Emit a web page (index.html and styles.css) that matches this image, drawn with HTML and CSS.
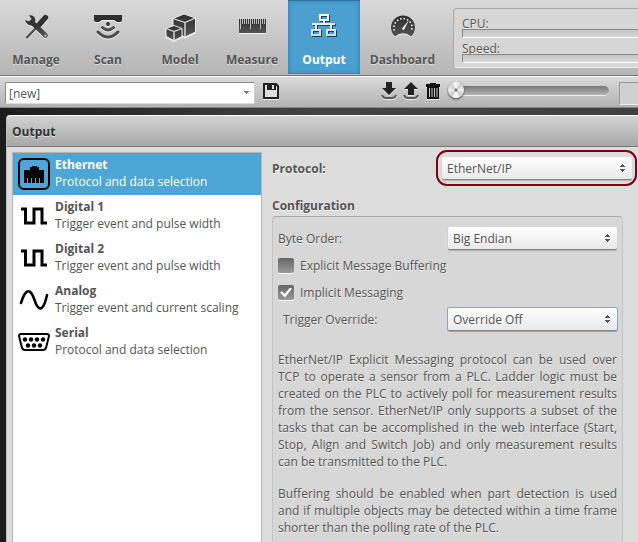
FILE: index.html
```html
<!DOCTYPE html>
<html lang="en">
<head>
<meta charset="utf-8">
<title>Output</title>
<link rel="stylesheet" href="styles.css">
</head>
<body>
<svg class="defs" aria-hidden="true">
  <defs>
    <linearGradient id="ink" x1="0" y1="0" x2="0" y2="1"><stop offset="0" stop-color="#2c2c2c"/><stop offset="1" stop-color="#555"/></linearGradient>
    <linearGradient id="pale" x1="0" y1="0" x2="0" y2="1"><stop offset="0" stop-color="#fff"/><stop offset="1" stop-color="#d8d8d8"/></linearGradient>
    <symbol id="pulse" viewBox="0 0 32 32"><path d="M3 9h4.500v14h8.500V9h8v14h5" fill="none" stroke="#000" stroke-width="3"/></symbol>
  </defs>
</svg>
<header class="toolbar">
  <nav class="tabs">
    <a class="tab" href="#manage">
      <svg class="tab-icon" viewBox="0 0 32 32"><path d="M7 25.500 18 14" stroke="#4a4a4a" stroke-width="2.200" stroke-linecap="round"/><path d="M18.500 13.500 25.500 5.500" stroke="#303030" stroke-width="5.400" stroke-linecap="round"/><path d="M13 11.500 25.500 23.500" stroke="url(#ink)" stroke-width="4.800" stroke-linecap="round"/><path d="M9 3.500C13 2.500 16.500 6 15 10.500S8 14.500 5.500 9.500V8L9 9.500 11.500 7z" fill="#333"/><circle cx="25.500" cy="23.500" r="1" fill="#ddd"/></svg>
      <span>Manage</span></a>
    <a class="tab" href="#scan">
      <svg class="tab-icon" viewBox="0 0 32 32"><path d="M2 3h28v5q0 2-2 2h-3l-3-2H10l-3 2H4Q2 10 2 8z" fill="#2e2e2e"/><circle cx="16" cy="12" r="2" fill="#333"/><path d="M10.500 15.500q5.500 5 11 0M6 20q10 10 20 0" fill="none" stroke="#4c4c4c" stroke-width="3" stroke-linecap="round"/></svg>
      <span>Scan</span></a>
    <a class="tab" href="#model">
      <svg class="tab-icon" viewBox="0 0 32 32"><g fill="url(#ink)" stroke="#e8e8e8" stroke-linejoin="round"><path d="M9 6.500 20 2l11.500 4v14L21 25 9 20z"/><path d="M9 6.500l12 4 10.500-4.500M21 10.500V25" fill="none" stroke-width="1.300"/><path d="M2 16.500l8-3 8 3v8l-8 4-8-4z"/><path d="M2 16.500l8 3 8-3M10 19.500v9" fill="none" stroke-width="1.300"/></g></svg>
      <span>Model</span></a>
    <a class="tab" href="#measure">
      <svg class="tab-icon" viewBox="0 0 32 32"><path d="M3 7h27v14H3z" fill="url(#ink)"/><path d="M4.500 7v10M6.500 7v5M8.500 7v5M10.500 7v5M12.500 7v5M14.500 7v10M16.500 7v5M18.500 7v5M20.500 7v5M22.500 7v5M24.500 7v10M26.500 7v5M28.500 7v5" stroke="#bbb"/></svg>
      <span>Measure</span></a>
    <a class="tab active" href="#output" aria-current="page">
      <svg class="tab-icon" viewBox="0 0 32 32"><g fill="none" stroke="#173f57" stroke-width="2" transform="translate(1 1)"><path d="M12 3h8v5h-8zM16 8v4M4 12h23M8 12v5M23 12v5M4 18h8v5H4zM19 18h8v5h-8z"/></g><g fill="none" stroke="url(#pale)" stroke-width="2"><path d="M12 3h8v5h-8zM16 8v4M8 12v5M23 12v5M4 18h8v5H4zM19 18h8v5h-8z"/><path d="M4 12h23" stroke="#eee"/></g></svg>
      <span>Output</span></a>
    <a class="tab wide" href="#dashboard">
      <svg class="tab-icon" viewBox="0 0 32 32"><path d="M8 24.500A12 12 0 1 1 24 24.500Q16 18 8 24.500z" fill="url(#ink)"/><path d="M7.500 18.500a9 9 0 1 1 17 0" fill="none" stroke="#eee" stroke-width="1.700" stroke-dasharray="1.500 2"/><path d="M14.500 17 22 8l-5 10z" fill="#eee"/></svg>
      <span>Dashboard</span></a>
  </nav>
  <div class="stats">
    <div class="stat"><span>CPU:</span><div class="meter"></div></div>
    <div class="stat"><span>Speed:</span><div class="meter"></div></div>
  </div>
</header>
<div class="jobbar">
  <select class="job" aria-label="Job"><option>[new]</option></select>
  <button class="icon-button save" aria-label="Save"><svg viewBox="0 0 18 18"><path d="M2 2h12l2 2v12H2z" fill="#ddd" stroke="#222" stroke-width="2"/><path d="M5 2h9v6H5z" fill="#222"/><path d="M10 3h2v4h-2z" fill="#ddd"/></svg></button>
  <div class="actions">
    <button class="icon-button" aria-label="Download"><svg viewBox="0 0 18 18"><path d="M6 0h6v6h4l-7 7-7-7h4z" fill="#222"/><path d="M2 13q1 3 4 3h6q3 0 4-3" fill="none" stroke="#555" stroke-width="2"/></svg></button>
    <button class="icon-button" aria-label="Upload"><svg viewBox="0 0 18 18"><path d="M9 0l7 7h-4v6H6V7H2z" fill="#222"/><path d="M2 13q1 3 4 3h6q3 0 4-3" fill="none" stroke="#555" stroke-width="2"/></svg></button>
    <button class="icon-button" aria-label="Delete"><svg viewBox="0 0 18 18"><path d="M2 2h4V1h6v1h4v3h-1v12H3V5H2z" fill="#111"/><path d="M5.500 6v9M8 6v9M10.500 6v9M13 6v9" stroke="#ccc"/></svg></button>
  </div>
  <input class="seek" type="range" min="0" max="100" value="0" aria-label="Position">
  <input class="position" type="text" aria-label="Frame">
</div>
<main class="panel">
  <h1 class="panel-title">Output</h1>
  <div class="panel-body">
    <nav class="outputs">
      <a class="output selected" href="#ethernet"><svg viewBox="0 0 32 32"><rect x="1" y="1" width="30" height="30" rx="5" fill="none" stroke="#000" stroke-width="2"/><path d="M6 12h6V9h2V8h5v1h2v3h5v13H6z"/><path d="M9.500 20v5M13.500 20v5M17.500 20v5M21.500 20v5" stroke="#4da6d5"/></svg><span class="output-text"><b>Ethernet</b><span>Protocol and data selection</span></span></a>
      <a class="output" href="#digital1"><svg><use href="#pulse"/></svg><span class="output-text"><b>Digital 1</b><span>Trigger event and pulse width</span></span></a>
      <a class="output" href="#digital2"><svg><use href="#pulse"/></svg><span class="output-text"><b>Digital 2</b><span>Trigger event and pulse width</span></span></a>
      <a class="output" href="#analog"><svg viewBox="0 0 32 32"><path d="M3 19C7 6 11 4 15 12l3 8c4 8 8 5 11-9" fill="none" stroke="#000" stroke-width="2.600" stroke-linecap="round"/></svg><span class="output-text"><b>Analog</b><span>Trigger event and current scaling</span></span></a>
      <a class="output" href="#serial"><svg viewBox="0 0 32 32"><path d="M3 8h26q2 0 2 2l-3 12q-1 2-3 2H7q-2 0-3-2L1 10q0-2 2-2z" fill="none" stroke="#000" stroke-width="2"/><g><circle cx="7" cy="13.500" r="2.200"/><circle cx="13" cy="13.500" r="2.200"/><circle cx="19" cy="13.500" r="2.200"/><circle cx="25" cy="13.500" r="2.200"/><circle cx="10" cy="19.500" r="2.200"/><circle cx="16" cy="19.500" r="2.200"/><circle cx="22" cy="19.500" r="2.200"/></g></svg><span class="output-text"><b>Serial</b><span>Protocol and data selection</span></span></a>
    </nav>
    <section class="settings">
      <div class="protocol">
        <label for="protocol">Protocol:</label>
        <div class="highlight"><select id="protocol" class="picker"><option>EtherNet/IP</option></select></div>
      </div>
      <h2>Configuration</h2>
      <div class="group">
        <div class="field"><label for="order">Byte Order:</label><select id="order" class="picker"><option>Big Endian</option></select></div>
        <label class="field check"><input type="checkbox">Explicit Message Buffering</label>
        <label class="field check"><input type="checkbox" checked>Implicit Messaging</label>
        <div class="field sub"><label for="trigger">Trigger Override:</label><select id="trigger" class="picker focused"><option>Override Off</option></select></div>
        <p>EtherNet/IP Explicit Messaging protocol can be used over TCP to operate a sensor from a PLC. Ladder logic must be created on the PLC to actively poll for measurement results from the sensor. EtherNet/IP only supports a subset of the tasks that can be accomplished in the web interface (Start, Stop, Align and Switch Job) and only measurement results can be transmitted to the PLC.</p>
        <p>Buffering should be enabled when part detection is used and if multiple objects may be detected within a time frame shorter than the polling rate of the PLC.</p>
      </div>
    </section>
  </div>
</main>
</body>
</html>
```
FILE: styles.css
```css
* { box-sizing: border-box; }
body {
  margin: 0;
  height: 100vh;
  overflow: hidden;
  display: flex;
  flex-direction: column;
  background: linear-gradient(90deg, #1c1c1c, #444 50%, #404040);
  color: #555;
  font: 12px/17px "Open Sans", "Noto Sans", sans-serif;
  text-shadow: 0 1px 0 rgba(255, 255, 255, .6);
}
a { color: inherit; text-decoration: none; }
select, input, button { font: inherit; color: inherit; margin: 0; }
.defs { position: absolute; width: 0; height: 0; }

.toolbar {
  flex: none;
  display: flex;
  height: 76px;
  background: linear-gradient(#d9d9d9, #b5b5b5);
  border-bottom: 1px solid #777;
}
.tabs { display: flex; flex: none; height: 74px; }
.tab {
  width: 72px;
  display: flex;
  flex-direction: column;
  align-items: center;
  gap: 7px;
  padding-top: 12px;
  font-weight: bold;
}
.tab.wide { width: 85px; }
.tab-icon { width: 32px; height: 32px; filter: drop-shadow(0 1px 0 rgba(255, 255, 255, .7)); }
.tab.active {
  background: #4ba0d0;
  color: #fff;
  text-shadow: none;
  box-shadow: inset 0 0 4px #2a74a0, inset 0 1px 0 #35759b;
}
.tab.active .tab-icon { filter: none; }
.stats {
  flex: 1;
  margin: 8px 0 7px 8px;
  padding: 6px 0 0 8px;
  background: #d6d6d6;
  border: 1px solid #aaa;
  border-bottom-color: #eee;
  border-right: 0;
  border-radius: 4px 0 0 4px;
}
.stat { height: 25px; display: flex; flex-direction: column; line-height: 18px; }
.stat span { height: 14px; }
.meter {
  height: 9px;
  background: linear-gradient(#c4c4c4, #d8d8d8);
  border: solid #888;
  border-width: 1px 0 1px 1px;
  border-bottom-color: #fff;
}

.jobbar {
  flex: none;
  display: flex;
  align-items: flex-start;
  height: 32px;
  padding: 5px 0 0 5px;
  background: linear-gradient(#dadada, #b2b2b2);
  border-top: 1px solid #fff;
  border-bottom: 1px solid #888;
}
.job {
  appearance: none;
  width: 250px;
  height: 22px;
  padding: 0 3px;
  border: 1px solid #888;
  border-right-color: #ccc;
  border-bottom-color: #ddd;
  border-radius: 2px;
  background:
    linear-gradient(#777, #777) right 5px top 8px / 5px 1px no-repeat,
    linear-gradient(#777, #777) right 6px top 9px / 3px 1px no-repeat,
    linear-gradient(#777, #777) right 7px top 10px / 1px 1px no-repeat,
    #fff;
}
.icon-button { width: 18px; height: 18px; padding: 0; border: 0; background: none; }
.icon-button svg { display: block; width: 18px; height: 18px; filter: drop-shadow(0 1px 0 rgba(255, 255, 255, .7)); }
.save { margin-left: 7px; }
.actions { display: flex; gap: 4px; margin-left: 100px; }
.seek {
  appearance: none;
  width: 161px;
  height: 18px;
  margin-left: 6px;
  background: none;
}
.seek::-webkit-slider-runnable-track {
  height: 10px;
  border-radius: 5px;
  background: linear-gradient(#777, #b4b4b4);
  border-bottom: 1px solid #eee;
}
.seek::-webkit-slider-thumb {
  appearance: none;
  width: 16px;
  height: 16px;
  margin-top: -4px;
  border-radius: 50%;
  background: radial-gradient(#777 0 1px, transparent 2px), conic-gradient(#fff, #ccc 45deg, #eee 90deg, #ccc 135deg, #fff 180deg, #ccc 225deg, #eee 270deg, #ccc 315deg, #fff);
  box-shadow: 0 1px 2px #333;
}
.position {
  flex: 1;
  min-width: 0;
  height: 23px;
  margin-left: 10px;
  background: #d0d0d0;
  border: 1px solid #999;
  border-width: 1px 0 1px 1px;
  border-bottom-color: #eee;
}

.panel {
  flex: 1;
  min-height: 0;
  overflow: hidden;
  display: flex;
  flex-direction: column;
  margin: 7px 0 0 6px;
  background: #ddd;
  border-left: 1px solid #bbb;
  border-radius: 4px 0 0 0;
}
.panel-title {
  flex: none;
  margin: 0;
  height: 32px;
  padding-left: 5px;
  font-size: 12px;
  line-height: 32px;
  color: #333;
  background: linear-gradient(#d2d2d2, #a8a8a8);
  border-top: 1px solid #fff;
  border-bottom: 1px solid #777;
  border-radius: 4px 0 0 0;
}
.panel-body { flex: 1; min-height: 0; display: flex; padding-left: 5px; }
.outputs {
  flex: none;
  width: 250px;
  margin-top: 5px;
  background: #fff;
  border: 1px solid #b5b5b5;
  border-bottom: 0;
}
.output { display: flex; height: 42px; padding: 5px; gap: 5px; }
.output svg { flex: none; width: 32px; height: 32px; }
.output-text { display: flex; flex-direction: column; margin-top: -2px; }
.output.selected { background: #4da6d5; color: #fff; text-shadow: none; }

.settings { flex: 1; min-width: 0; display: flex; flex-direction: column; padding: 3px 0 0 10px; }
.protocol { display: flex; justify-content: space-between; align-items: center; padding-right: 1px; font-weight: bold; }
.highlight {
  width: 201px;
  height: 36px;
  padding: 5px 3px 5px 4px;
  border: 2px solid #7d0010;
  border-radius: 11px;
  font-weight: normal;
}
.highlight .picker { width: 100%; }
h2 { margin: 11px 0 1px; font-size: 12px; line-height: 18px; }
.picker {
  appearance: none;
  width: 169px;
  height: 23px;
  padding: 0 5px;
  border: 0;
  border-bottom: 1px solid #888;
  border-radius: 2px;
  background:
    linear-gradient(#555, #555) right 9px top 7px / 1px 1px no-repeat,
    linear-gradient(#555, #555) right 8px top 8px / 3px 2px no-repeat,
    linear-gradient(#555, #555) right 7px top 9px / 5px 1px no-repeat,
    linear-gradient(#555, #555) right 7px top 12px / 5px 1px no-repeat,
    linear-gradient(#555, #555) right 8px top 13px / 3px 1px no-repeat,
    linear-gradient(#555, #555) right 9px top 14px / 1px 1px no-repeat,
    linear-gradient(#fff, #e9e9e9);
  box-shadow: 0 1px 1px rgba(0, 0, 0, .2);
}
.picker.focused { box-shadow: 0 0 0 1px #7fa8d0; }
.group {
  flex: 1;
  margin-right: 15px;
  padding: 8px 5px 0;
  background: #d7d7d7;
  border: 1px solid #c4c4c4;
  border-top-color: #aaa;
  border-bottom: 0;
  border-radius: 4px 4px 0 0;
}
.field { display: flex; align-items: center; justify-content: space-between; height: 27px; }
.sub > label { margin-left: 5px; }
.check { justify-content: flex-start; gap: 6px; }
.check input {
  appearance: none;
  width: 16px;
  height: 15px;
  display: grid;
  place-items: center;
  border-radius: 2px;
  background: linear-gradient(#666, #999);
  box-shadow: 0 1px 0 #fff;
}
.check input:checked::before {
  content: "";
  width: 12px;
  height: 10px;
  background: #fff;
  clip-path: polygon(0 50%, 18% 38%, 38% 65%, 84% 0, 100% 10%, 42% 100%);
}
p { margin: 0; text-align: justify; }
.sub + p { margin: 18px 0 15px; }
```
